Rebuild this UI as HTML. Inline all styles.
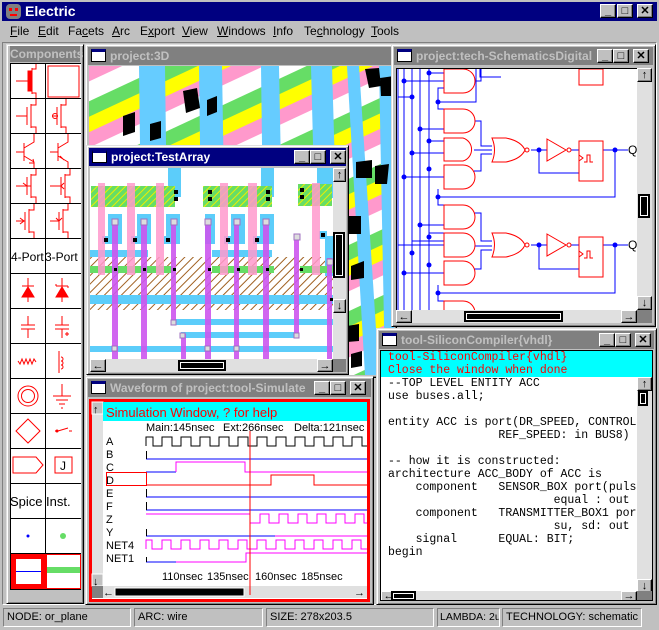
<!DOCTYPE html>
<html><head><meta charset="utf-8"><style>
*{margin:0;padding:0;box-sizing:border-box}
body{width:659px;height:630px;background:#c0c0c0;position:relative;overflow:hidden;font-family:"Liberation Sans",sans-serif;font-size:12px}
.a{position:absolute}
.rz{border:1px solid;border-color:#dfdfdf #000 #000 #dfdfdf;box-shadow:inset 1px 1px #fff,inset -1px -1px #808080;background:#c0c0c0}
.sk{border:1px solid;border-color:#808080 #fff #fff #808080}
.tb{position:absolute;height:18px;color:#c0c0c0;background:#808080;font-weight:bold;font-size:12px;line-height:18px;padding-left:22px;white-space:nowrap;overflow:hidden}
.tb.act{background:#000080;color:#fff}
.ic{position:absolute;left:3px;top:2px;width:15px;height:13px;background:#fff;border:1px solid #000;border-top:3px solid #000080}
.bt{position:absolute;width:16px;height:14px;background:#c0c0c0;border:1px solid;border-color:#fff #000 #000 #fff;box-shadow:inset -1px -1px #808080;color:#000;font-size:11px;line-height:12px;text-align:center;font-weight:bold}
.menu span{position:absolute;top:24px;font-size:12px}
.st{position:absolute;top:608px;height:19px;border:1px solid;border-color:#808080 #fff #fff #808080;font-size:11px;line-height:17px;padding-left:3px;white-space:nowrap;overflow:hidden}
.mono{font-family:"Liberation Mono",monospace;font-size:11.5px;line-height:13px;white-space:pre}
</style></head><body>

<div class="a" style="left:2px;top:2px;width:655px;height:19px;background:#000080"></div>
<div class="a" style="left:6px;top:4px;width:15px;height:15px;background:#808080;border-radius:4px"><div class="a" style="left:3px;top:4px;width:3px;height:3px;background:#f00"></div><div class="a" style="left:9px;top:4px;width:3px;height:3px;background:#f00"></div><div class="a" style="left:4px;top:10px;width:7px;height:2px;background:#f00"></div></div>
<div class="a" style="left:25px;top:3px;color:#fff;font-weight:bold;font-size:14px">Electric</div>
<div class="bt" style="left:600px;top:4px">_</div><div class="bt" style="left:617px;top:4px">□</div><div class="bt" style="left:637px;top:4px">✕</div>
<div class="menu">
<span style="left:10px"><u>F</u>ile</span><span style="left:38px"><u>E</u>dit</span><span style="left:68px">Fa<u>c</u>ets</span><span style="left:112px"><u>A</u>rc</span><span style="left:140px">E<u>x</u>port</span><span style="left:182px"><u>V</u>iew</span><span style="left:217px"><u>W</u>indows</span><span style="left:273px"><u>I</u>nfo</span><span style="left:304px">Te<u>c</u>hnology</span><span style="left:371px"><u>T</u>ools</span>
</div>
<div class="a sk" style="left:2px;top:42px;width:655px;height:563px"></div>

<div class="a rz" style="left:6px;top:44px;width:78px;height:560px"></div>
<div class="a" style="left:10px;top:46px;width:70px;height:16px;background:#808080;color:#c0c0c0;font-weight:bold;font-size:12px;line-height:16px;text-align:center">Components</div>
<div class="a" style="left:10px;top:63px;width:71px;height:527px;background:#000"></div>
<svg class="a" style="left:11px;top:64px" width="70" height="525" viewBox="0 0 70 525">
<g fill="#fff"><rect x="0" y="0" width="70" height="525"/></g>
<g stroke="#000" stroke-width="1"><line x1="34.5" y1="0" x2="34.5" y2="525"/>
<line x1="0" y1="34.5" x2="70" y2="34.5"/><line x1="0" y1="69.5" x2="70" y2="69.5"/><line x1="0" y1="104.5" x2="70" y2="104.5"/><line x1="0" y1="139.5" x2="70" y2="139.5"/><line x1="0" y1="174.5" x2="70" y2="174.5"/><line x1="0" y1="209.5" x2="70" y2="209.5"/><line x1="0" y1="244.5" x2="70" y2="244.5"/><line x1="0" y1="279.5" x2="70" y2="279.5"/><line x1="0" y1="314.5" x2="70" y2="314.5"/><line x1="0" y1="349.5" x2="70" y2="349.5"/><line x1="0" y1="384.5" x2="70" y2="384.5"/><line x1="0" y1="419.5" x2="70" y2="419.5"/><line x1="0" y1="454.5" x2="70" y2="454.5"/><line x1="0" y1="489.5" x2="70" y2="489.5"/></g>
<g stroke="#f00" fill="none" stroke-width="1">
<path d="M5 17H17M17 7V27M21 4V8M21 26V30" /><rect x="17" y="7" width="4" height="20" fill="#f00"/><path d="M21 5h4V0M21 29h4v5"/>
<rect x="37" y="2" width="31" height="31"/>
<path d="M5 52H16M16 43V61M20 40V64M20 41h5v-6M20 63h5v6"/>
<path d="M41 52H46M46 43V61M50 40V64M50 41h5v-6M50 63h5v6"/><circle cx="44" cy="52" r="2.5"/>
<path d="M5 88H13M13 79V97M13 84l10-6V70M13 92l10 6V104M18 99l5 0-1-4"/>
<path d="M39 88H47M47 79V97M47 84l10-6V70M47 92l10 6V104M49 92l4 4"/>
<path d="M5 122H16M16 113V131M20 110V134M20 111h5v-6M20 133h5v6M16 122l-4-3M20 122h-4"/>
<path d="M39 122H50M50 113V131M54 110V134M54 111h5v-6M54 133h5v6M50 122l3-3M50 122l3 3"/>
<path d="M5 157h9M14 148v18M18 145v24M18 146h5v-6M18 168h5v6M9 154l4 3-4 3"/>
<path d="M39 157h9M48 148v18M52 145v24M52 146h5v-6M52 168h5v6M45 154l3 3 3-3"/>
</g>
<text x="0" y="197" font-size="12" fill="#000" font-family="Liberation Sans">4-Port</text><text x="34" y="197" font-size="12" fill="#000" font-family="Liberation Sans">3-Port</text>
<g fill="#f00" stroke="#f00"><path d="M11 233h12l-6-10z"/><path d="M17 214v24M11 222h12"/><path d="M45 233h12l-6-10z"/><path d="M51 214v24M45 222h12M45 222v-2M57 222v2"/></g>
<g stroke="#f00" fill="none"><path d="M17 252v9M10 261h14M10 265h14M17 265v9"/><path d="M51 252v9M44 261h14M44 265h14M51 265v9M54 270h4M56 268v4"/>
<path d="M7 297l2 3 2-5 2 5 2-5 2 5 2-5 2 5 2-5 2 3"/><path d="M48 287v22M50 293a2 2 0 1 1 0 4a2 2 0 1 1 0 4a2 2 0 1 1 0 4"/>
<circle cx="17" cy="332" r="10"/><circle cx="17" cy="332" r="6.5"/><path d="M51 320v12M42 332h18M45 336h12M48 340h6M50 344h2"/>
<path d="M17 355l12 12-12 12-12-12z"/><path d="M44 367h3l10-3M58 367h3"/><circle cx="46" cy="367" r="1" fill="#f00"/>
<path d="M2 393h23l7 8-7 8H2z"/><rect x="44" y="393" width="17" height="16"/></g>
<text x="49" y="406" font-size="12" font-family="Liberation Sans">J</text>
<text x="-1" y="442" font-size="13" font-family="Liberation Sans">Spice</text><text x="35" y="442" font-size="13" font-family="Liberation Sans">Inst.</text>
<circle cx="17" cy="472" r="1.5" fill="#00f"/><circle cx="52" cy="472" r="3" fill="#6d6"/>
<rect x="0" y="490" width="35" height="35" fill="#f00"/><rect x="5" y="495" width="25" height="25" fill="#fff"/><line x1="5" y1="507.5" x2="30" y2="507.5" stroke="#00f"/>
<rect x="35.5" y="490.5" width="34" height="34" fill="#fff" stroke="#f00"/><rect x="36" y="503" width="33" height="6" fill="#6d6"/>
</svg>

<div class="a rz" style="left:85px;top:44px;width:312px;height:334px"></div>
<div class="tb" style="left:88px;top:47px;width:306px">project:3D<div class="ic"></div></div>
<div class="a" style="left:89px;top:66px;width:305px;height:309px;overflow:hidden;background:#6d6">
<svg width="305" height="309">
<defs><pattern id="dg" width="60" height="60" patternUnits="userSpaceOnUse" patternTransform="rotate(-25)"><rect width="60" height="14" fill="#ff99cc"/><rect y="14" width="60" height="18" fill="#fff"/><rect y="32" width="60" height="14" fill="#6d6"/><rect y="46" width="60" height="14" fill="#ff0"/></pattern></defs>
<rect width="305" height="309" fill="url(#dg)"/>
<g fill="#66ccff"><polygon points="50,0 76,0 80,309 54,309"/><polygon points="110,0 133,0 138,309 114,309"/><polygon points="172,0 190,0 196,309 176,309"/><polygon points="222,0 243,0 252,309 230,309"/><polygon points="258,0 270,0 290,309 276,309"/><polygon points="290,0 305,0 305,309 296,309"/></g>
<g fill="#000"><polygon points="94,25 108,22 111,42 97,47"/><polygon points="118,34 128,30 128,46 118,50"/><polygon points="34,50 46,46 46,66 34,70"/><polygon points="61,58 72,55 72,72 61,75"/><polygon points="276,3 290,2 292,20 280,22"/><polygon points="291,12 305,10 305,30 292,30"/><polygon points="267,96 283,94 283,112 267,112"/><polygon points="286,100 300,98 298,118 286,118"/><polygon points="258,150 272,150 272,168 258,168"/><polygon points="262,200 275,195 275,212 262,214"/><polygon points="258,260 270,258 270,275 258,276"/><polygon points="262,288 273,285 273,300 262,302"/></g>
</svg></div>

<div class="a rz" style="left:391px;top:44px;width:265px;height:283px"></div>
<div class="tb" style="left:394px;top:47px;width:259px">project:tech-SchematicsDigital<div class="ic"></div>
<div class="bt" style="left:203px;top:2px">_</div><div class="bt" style="left:219px;top:2px">□</div><div class="bt" style="left:239px;top:2px">✕</div></div>
<div class="a" style="left:396px;top:68px;width:242px;height:243px;background:#fff;overflow:hidden;border-left:1px solid #000;border-top:1px solid #000">
<svg width="242" height="243" viewBox="396 68 242 243">
<g stroke="#00f" fill="none">
<path d="M403 68V311M411 68V311M419 68V311M428 68V311M397 68V311"/>
<path d="M403 80H443M428 72H443M411 96H397M443 87H437V101H475V68M479 68V76H500M473 80H480V68"/>
<path d="M419 128H443M428 140H443M411 152H443M403 176H443M473 120H480V145H491M473 149H491M473 170H480V153H491M437 101V108H443"/>
<path d="M530 149H546M538 149V172H578M570 149H578M602 149H627M614 149V196H437V204H443M437 188V196"/>
<path d="M419 224H443M428 232H443M411 240H443M403 272H443M397 244H443M473 212H480V240H491M473 245H491M473 268H480V249H491"/>
<path d="M530 244H546M538 244V268H578M570 244H578M602 244H627M614 244V292H437V300H443M437 284V292"/>
</g>
<g fill="#00f"><circle cx="403" cy="80" r="2.5"/><circle cx="428" cy="72" r="2.5"/><circle cx="411" cy="96" r="2.5"/><circle cx="437" cy="101" r="2.5"/><circle cx="419" cy="128" r="2.5"/><circle cx="428" cy="140" r="2.5"/><circle cx="411" cy="152" r="2.5"/><circle cx="428" cy="168" r="2.5"/><circle cx="403" cy="176" r="2.5"/><circle cx="437" cy="196" r="2.5"/><circle cx="538" cy="149" r="2.5"/><circle cx="614" cy="149" r="2.5"/><circle cx="419" cy="224" r="2.5"/><circle cx="428" cy="236" r="2.5"/><circle cx="411" cy="252" r="2.5"/><circle cx="428" cy="264" r="2.5"/><circle cx="403" cy="272" r="2.5"/><circle cx="437" cy="292" r="2.5"/><circle cx="538" cy="244" r="2.5"/><circle cx="614" cy="244" r="2.5"/></g>
<g stroke="#f00" fill="#fff">
<path d="M443 68V92H462A12 12 0 0 0 462 68Z"/><path d="M443 108V132H462A12 12 0 0 0 462 108Z"/><path d="M443 137V160H462A12 12 0 0 0 462 137Z"/><path d="M443 164V188H462A12 12 0 0 0 462 164Z"/>
<path d="M443 204V228H462A12 12 0 0 0 462 204Z"/><path d="M443 232V256H462A12 12 0 0 0 462 232Z"/><path d="M443 260V284H462A12 12 0 0 0 462 260Z"/><path d="M443 300V324H462A12 12 0 0 0 462 300Z"/>
<path d="M491 137H505Q520 140 524 149Q520 158 505 161H491Q496 149 491 137Z"/><path d="M491 232H505Q520 235 524 244Q520 253 505 256H491Q496 244 491 232Z"/>
<circle cx="526" cy="149" r="2"/><circle cx="526" cy="244" r="2"/><path d="M546 138L565 149L546 160Z"/><path d="M546 233L565 244L546 255Z"/><circle cx="568" cy="149" r="2"/><circle cx="568" cy="244" r="2"/>
<rect x="578" y="140" width="24" height="40"/><rect x="578" y="236" width="24" height="40"/><rect x="578" y="68" width="24" height="16"/>
<path d="M578 154l4 3-4 3M583 161h3v-7h3v7h3M578 250l4 3-4 3M583 257h3v-7h3v7h3" fill="none"/>
</g>
<text x="627" y="153" font-size="12" font-family="Liberation Sans">QB</text><text x="627" y="248" font-size="12" font-family="Liberation Sans">QC</text>
</svg></div>
<div class="a" style="left:637px;top:68px;width:15px;height:242px;background:#e0e0e0"><div class="bt" style="left:0;top:0;width:15px">↑</div><div class="a" style="left:1px;top:126px;width:12px;height:24px;border:2px solid #000;background:#000;box-shadow:inset 0 0 0 1px #fff"></div><div class="bt" style="left:0;top:228px;width:15px">↓</div></div>
<div class="a" style="left:396px;top:310px;width:241px;height:13px;background:#e0e0e0"><div class="bt" style="left:0;top:0;height:13px">←</div><div class="a" style="left:68px;top:1px;width:99px;height:11px;border:2px solid #000;background:#000;box-shadow:inset 0 0 0 1px #fff"></div><div class="bt" style="left:225px;top:0;height:13px">→</div></div>
<div class="a" style="left:637px;top:310px;width:15px;height:13px;background:#808080"></div>

<div class="a rz" style="left:86px;top:145px;width:263px;height:230px"></div>
<div class="tb act" style="left:89px;top:148px;width:257px">project:TestArray<div class="ic"></div>
<div class="bt" style="left:205px;top:2px">_</div><div class="bt" style="left:221px;top:2px">□</div><div class="bt" style="left:241px;top:2px">✕</div></div>
<div class="a" style="left:90px;top:168px;width:243px;height:191px;background:#fff;overflow:hidden">
<svg width="243" height="191" viewBox="90 168 243 191">
<defs><pattern id="hy" width="5" height="5" patternUnits="userSpaceOnUse" patternTransform="rotate(45)"><rect width="5" height="5" fill="#6d6"/><rect width="1" height="5" fill="#ee0"/></pattern>
<pattern id="hb" width="6" height="6" patternUnits="userSpaceOnUse" patternTransform="rotate(45)"><rect width="1" height="6" fill="#a06020"/></pattern></defs>
<rect x="90" y="257" width="243" height="53" fill="url(#hb)"/>
<g fill="#5ccdfa"><rect x="168" y="168" width="13" height="29"/><rect x="261" y="168" width="13" height="29"/><rect x="317" y="168" width="16" height="30"/>
<rect x="108" y="214" width="14" height="30"/><rect x="137" y="214" width="14" height="30"/><rect x="166" y="214" width="14" height="30"/><rect x="205" y="214" width="10" height="30"/><rect x="231" y="214" width="14" height="30"/><rect x="260" y="214" width="14" height="30"/><rect x="325" y="236" width="8" height="40"/>
<rect x="90" y="250" width="58" height="7"/><rect x="212" y="250" width="60" height="7"/><rect x="90" y="295" width="243" height="9"/><rect x="175" y="319" width="158" height="6"/><rect x="181" y="332" width="115" height="6"/><rect x="90" y="346" width="243" height="6"/>
<rect x="102" y="236" width="8" height="8"/><rect x="131" y="236" width="8" height="8"/><rect x="164" y="236" width="8" height="8"/><rect x="224" y="236" width="8" height="8"/><rect x="253" y="236" width="8" height="8"/><rect x="319" y="231" width="8" height="8"/></g>
<rect x="91" y="186" width="84" height="21" fill="url(#hy)"/><rect x="203" y="186" width="69" height="21" fill="url(#hy)"/><rect x="298" y="184" width="34" height="22" fill="url(#hy)"/>
<rect x="90" y="266" width="83" height="7" fill="#6d6"/><rect x="212" y="266" width="62" height="7" fill="#6d6"/><rect x="300" y="266" width="33" height="7" fill="#6d6"/>
<g fill="#ff99cc" fill-opacity="0.85"><rect x="98" y="183" width="7" height="92"/><rect x="127" y="183" width="8" height="92"/><rect x="156" y="183" width="8" height="92"/><rect x="220" y="183" width="8" height="92"/><rect x="248" y="183" width="9" height="92"/><rect x="312" y="183" width="8" height="92"/></g>
<g fill="#cc55ee" fill-opacity="0.9"><rect x="112" y="222" width="6" height="137"/><rect x="141" y="222" width="6" height="137"/><rect x="171" y="222" width="5" height="101"/><rect x="205" y="222" width="6" height="137"/><rect x="234" y="222" width="5" height="137"/><rect x="263" y="222" width="6" height="137"/><rect x="294" y="238" width="5" height="100"/><rect x="327" y="258" width="5" height="101"/><rect x="181" y="334" width="5" height="25"/></g>
<g fill="#ddd" stroke="#a070c0"><rect x="112" y="219" width="6" height="6"/><rect x="141" y="219" width="6" height="6"/><rect x="171" y="219" width="6" height="6"/><rect x="205" y="219" width="6" height="6"/><rect x="234" y="219" width="6" height="6"/><rect x="263" y="219" width="6" height="6"/><rect x="294" y="234" width="6" height="6"/><rect x="327" y="259" width="6" height="6"/><rect x="112" y="346" width="5" height="5"/><rect x="171" y="320" width="5" height="5"/><rect x="180" y="333" width="5" height="5"/><rect x="205" y="346" width="5" height="5"/><rect x="234" y="346" width="5" height="5"/><rect x="294" y="333" width="5" height="5"/></g>
<g fill="#000"><rect x="104" y="238" width="4" height="4"/><rect x="133" y="238" width="4" height="4"/><rect x="166" y="238" width="4" height="4"/><rect x="226" y="238" width="4" height="4"/><rect x="255" y="238" width="4" height="4"/><rect x="321" y="233" width="4" height="4"/><rect x="174" y="190" width="4" height="4"/><rect x="174" y="197" width="4" height="4"/><rect x="208" y="190" width="4" height="4"/><rect x="208" y="197" width="4" height="4"/><rect x="266" y="190" width="4" height="4"/><rect x="266" y="197" width="4" height="4"/><rect x="300" y="188" width="4" height="4"/><rect x="300" y="195" width="4" height="4"/><rect x="114" y="268" width="3" height="3"/><rect x="143" y="268" width="3" height="3"/><rect x="173" y="268" width="3" height="3"/><rect x="208" y="268" width="3" height="3"/><rect x="237" y="268" width="3" height="3"/><rect x="266" y="268" width="3" height="3"/><rect x="300" y="268" width="3" height="3"/><rect x="330" y="298" width="3" height="3"/></g>
</svg></div>
<div class="a" style="left:333px;top:168px;width:13px;height:191px;background:#e0e0e0"><div class="bt" style="left:0;top:0;width:13px">↑</div><div class="a" style="left:0px;top:64px;width:12px;height:46px;border:2px solid #000;background:#000;box-shadow:inset 0 0 0 1px #fff"></div><div class="bt" style="left:0;top:131px;width:13px">↓</div></div>
<div class="a" style="left:90px;top:359px;width:243px;height:13px;background:#e0e0e0"><div class="bt" style="left:0;top:0;height:13px">←</div><div class="a" style="left:88px;top:1px;width:48px;height:11px;border:2px solid #000;background:#000;box-shadow:inset 0 0 0 1px #fff"></div><div class="bt" style="left:227px;top:0;height:13px">→</div></div>
<div class="a" style="left:333px;top:359px;width:13px;height:13px;background:#808080"></div>

<div class="a rz" style="left:85px;top:376px;width:289px;height:229px"></div>
<div class="tb" style="left:88px;top:379px;width:283px">Waveform of project:tool-Simulate<div class="ic"></div>
<div class="bt" style="left:226px;top:2px">_</div><div class="bt" style="left:242px;top:2px">□</div><div class="bt" style="left:262px;top:2px">✕</div></div>
<svg class="a" style="left:89px;top:399px" width="281" height="203" viewBox="0 0 281 203">
<rect width="281" height="203" fill="#f00"/><rect x="3" y="3" width="275" height="197" fill="#fff"/>
<rect x="3" y="3" width="11" height="184" fill="#e0e0e0"/><rect x="3" y="3" width="11" height="12" fill="#c0c0c0" stroke="#fff"/><rect x="3" y="175" width="11" height="12" fill="#c0c0c0" stroke="#fff"/>
<text x="4" y="14" font-size="11" font-weight="bold">↑</text><text x="4" y="186" font-size="11" font-weight="bold">↓</text>
<rect x="3" y="187" width="11" height="12" fill="#808080"/>
<rect x="14" y="187" width="264" height="12" fill="#e0e0e0"/><text x="14" y="197" font-size="11" font-weight="bold">←</text><text x="265" y="197" font-size="11" font-weight="bold">→</text>
<rect x="26" y="189" width="129" height="8" fill="#000" stroke="#fff"/>
<rect x="14" y="3" width="264" height="19" fill="#0ff"/>
<text x="17" y="18" font-size="13" fill="#f00" font-family="Liberation Sans">Simulation Window, ? for help</text>
<g font-size="11" font-family="Liberation Sans"><text x="57" y="32">Main:145nsec</text><text x="134" y="32">Ext:266nsec</text><text x="205" y="32">Delta:121nsec</text></g>
<g font-size="11" font-family="Liberation Sans"><text x="17" y="46">A</text><text x="17" y="59">B</text><text x="17" y="72">C</text><text x="17" y="85">D</text><text x="17" y="98">E</text><text x="17" y="111">F</text><text x="17" y="124">Z</text><text x="17" y="137">Y</text><text x="17" y="150">NET4</text><text x="17" y="163">NET1</text></g>
<g fill="none" stroke-width="1">
<path stroke="#000" d="M57 47V38H64V47H73V38H83V47H92V38H102V47H111V38H121V47H130V38H140V47H149V38H159V47H168V38H178V47H187V38H197V47H206V38H216V47H225V38H235V47H244V38H254V47H263V38H273V47H278"/>
<path stroke="#00f" d="M57 60H278M57 73H87M57 98H278M57 111H278M57 137H186M57 163H87"/>
<path stroke="#000" d="M57.5 52V60M57.5 90V98M57.5 103V111M57.5 130V137M57.5 158V163"/>
<path stroke="#f0f" d="M87 73V63H156V73H278M57 115H161V124H171V115H180V124H190V115H199V124H209V115H218V124H228V115H237V124H247V115H256V124H266V115H275V124H278M186 137H278M57 150V141H63V150H73V141H82V150H92V141H101V150H111V141H120V150H130V141H139V150H149V141H158V150H168V141H177V150H187V141H196V150H206V141H215V150H225V141H234V150H244V141H253V150H263V141H272V150H278M87 163H157V154H278"/>
<path stroke="#f00" d="M17.5 73.5H57.5V86.5H17.5ZM57 86H182V76H225V86H278M161 32V196"/>
</g>
<g font-size="11" font-family="Liberation Sans"><text x="73" y="181">110nsec</text><text x="118" y="181">135nsec</text><text x="166" y="181">160nsec</text><text x="212" y="181">185nsec</text></g>
</svg>

<div class="a rz" style="left:376px;top:328px;width:281px;height:277px"></div>
<div class="tb" style="left:379px;top:331px;width:275px">tool-SiliconCompiler{vhdl}<div class="ic"></div>
<div class="bt" style="left:220px;top:2px">_</div><div class="bt" style="left:236px;top:2px">□</div><div class="bt" style="left:256px;top:2px">✕</div></div>
<div class="a" style="left:380px;top:350px;width:273px;height:251px;background:#fff;border:1px solid #000;overflow:hidden">
<div class="mono" style="position:absolute;left:0;top:0;width:273px;height:26px;background:#0ff;color:#f00;padding-left:7px">tool-SiliconCompiler{vhdl}
Close the window when done</div>
<div class="mono" style="position:absolute;left:7px;top:26px;color:#000">--TOP LEVEL ENTITY ACC
use buses.all;

entity ACC is port(DR_SPEED, CONTROL
                REF_SPEED: in BUS8)

-- how it is constructed:
architecture ACC_BODY of ACC is
    component   SENSOR_BOX port(puls
                        equal : out
    component   TRANSMITTER_BOX1 por
                        su, sd: out
    signal      EQUAL: BIT;
begin</div>
<div class="a" style="left:256px;top:26px;width:15px;height:214px;background:#e0e0e0"><div class="bt" style="left:0;top:0;width:15px">↑</div><div class="a" style="left:1px;top:14px;width:10px;height:15px;border:2px solid #000;background:#000;box-shadow:inset 0 0 0 1px #fff"></div><div class="bt" style="left:0;top:202px;width:15px">↓</div></div>
<div class="a" style="left:0;top:240px;width:256px;height:11px;background:#e0e0e0"><div class="bt" style="left:0;top:0;height:11px;line-height:9px">←</div><div class="a" style="left:10px;top:0;width:25px;height:10px;border:2px solid #000;background:#000;box-shadow:inset 0 0 0 1px #fff"></div><div class="bt" style="left:240px;top:0;height:11px;line-height:9px">→</div></div>
<div class="a" style="left:256px;top:240px;width:15px;height:11px;background:#808080"></div>
</div>

<div class="st" style="left:3px;width:128px">NODE: or_plane</div>
<div class="st" style="left:134px;width:129px">ARC: wire</div>
<div class="st" style="left:266px;width:168px">SIZE: 278x203.5</div>
<div class="st" style="left:437px;width:63px;font-size:10.5px;padding-left:2px">LAMBDA: 2u</div>
<div class="st" style="left:502px;width:140px">TECHNOLOGY: schematic</div>
</body></html>
